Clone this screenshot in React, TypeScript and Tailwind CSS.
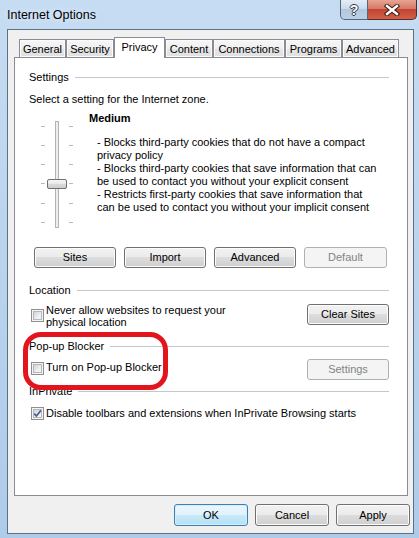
import React from 'react';

const tabs = [
  { label: 'General', w: 'w-[47px]' },
  { label: 'Security', w: 'w-[48px]' },
  { label: 'Privacy', w: 'w-[51px]', active: true },
  { label: 'Content', w: 'w-[48px]' },
  { label: 'Connections', w: 'w-[72px]' },
  { label: 'Programs', w: 'w-[57px]' },
  { label: 'Advanced', w: 'w-[57px]' },
];

const btn =
  'flex items-center justify-center rounded-[3px] border text-[11px] leading-[13px]';
const btnNormal =
  'border-[#707070] text-black bg-[linear-gradient(to_bottom,#f2f2f2_0%,#ebebeb_50%,#dddddd_50%,#cfcfcf_100%)] shadow-[inset_0_0_0_1px_#fcfcfc]';
const btnDisabled = 'border-[#adb2b5] bg-[#f4f4f4] text-[#838383]';
const btnDefault =
  'border-[#3c7fb1] text-black bg-[linear-gradient(to_bottom,#eaf6fd_0%,#e0f2fc_50%,#c9e9f9_50%,#b6e0f6_100%)] shadow-[inset_0_0_0_1px_#d6eefb]';

const Checkbox = ({ checked }: { checked?: boolean }) => (
  <span className="relative flex h-[13px] w-[13px] shrink-0 items-center justify-center border border-[#8e8f8f] bg-[#f4f4f4]">
    <span className="h-[9px] w-[9px] border border-[#b5b9be] bg-[linear-gradient(135deg,#cfd1d4_0%,#eceeef_60%,#f8f8f8_100%)]" />
    {checked && (
      <svg className="absolute left-[1px] top-[1px]" width="9" height="9" viewBox="0 0 9 9">
        <path d="M1.2 4.6 L3.4 7 L7.9 1.4" fill="none" stroke="#4a5f97" strokeWidth="1.7" />
      </svg>
    )}
  </span>
);

const GroupHeader = ({ title }: { title: string }) => (
  <div className="flex h-[13px] items-center">
    <span className="text-[11px] leading-[13px]">{title}</span>
    <div className="ml-[6px] h-px flex-1 bg-[#c3c7cb]" />
  </div>
);

const Slider = () => {
  const ticks = [5, 24, 43, 62, 82, 101];
  return (
    <svg width="32" height="107" viewBox="0 0 32 107">
      <defs>
        <linearGradient id="thumb" x1="0" y1="0" x2="0" y2="1">
          <stop offset="0" stopColor="#f7f7f7" />
          <stop offset="0.5" stopColor="#e8e8e8" />
          <stop offset="0.5" stopColor="#dadada" />
          <stop offset="1" stopColor="#cdcdcd" />
        </linearGradient>
      </defs>
      {ticks.map((y) => (
        <g key={y}>
          <rect x="0" y={y} width="4" height="1" fill="#b9b9b9" />
          <rect x="28" y={y} width="4" height="1" fill="#b9b9b9" />
        </g>
      ))}
      <rect x="14.5" y="0.5" width="3" height="106" fill="#eeeeee" stroke="#b3b3b3" />
      <rect x="6.5" y="58.5" width="19" height="9" rx="1.5" fill="url(#thumb)" stroke="#707070" />
    </svg>
  );
};

export default function App() {
  return (
    <div className="flex h-[538px] w-[419px] flex-col overflow-hidden bg-[linear-gradient(to_bottom,#c6dcf2_0%,#bcd5ee_40%,#aecbe9_100%)] font-['Liberation_Sans',Arial,sans-serif] text-black">
      {/* title bar */}
      <div className="flex h-[29px] shrink-0 items-start">
        <div className="pl-[7px] pt-[7px] text-[12.5px] leading-[16px] text-black [text-shadow:0_0_6px_#eaf3fb]">
          Internet Options
        </div>
        <div className="flex-1" />
        <div className="flex h-[20px] items-stretch">
          <div className="flex w-[28px] items-center justify-center rounded-bl-[5px] border border-t-0 border-[#53687d] bg-[linear-gradient(to_bottom,#e3edf7_0%,#c9d9ea_50%,#b3c8de_50%,#bcd0e5_100%)]">
            <span className="text-[14px] font-bold leading-[14px] text-white [text-shadow:1px_0_0_#2f3b47,-1px_0_0_#2f3b47,0_1px_0_#2f3b47,0_-1px_0_#2f3b47]">
              ?
            </span>
          </div>
          <div className="flex w-[49px] items-center justify-center rounded-br-[5px] border border-l-0 border-t-0 border-[#5b2a22] bg-[linear-gradient(to_bottom,#e8a493_0%,#d47a66_45%,#c0452e_50%,#d2604a_100%)]">
            <svg width="16" height="12" viewBox="0 0 16 12">
              <path d="M3 2 L13 10 M13 2 L3 10" stroke="#3d1a14" strokeWidth="4.4" strokeLinecap="square" />
              <path d="M3 2 L13 10 M13 2 L3 10" stroke="#ffffff" strokeWidth="2.4" strokeLinecap="square" />
            </svg>
          </div>
        </div>
        <div className="w-[2px]" />
      </div>

      {/* client area */}
      <div className="ml-[7px] flex h-[505px] w-[407px] shrink-0 flex-col border border-[#5d7185] bg-[#f0f0f0]">
        <div className="ml-[11px] mt-[7px] flex h-[21px] items-start">
          {tabs.map((t) =>
            t.active ? (
              <div
                key={t.label}
                className={`${t.w} relative z-10 flex h-[21px] items-start justify-center border border-b-0 border-[#898c95] bg-white pt-[3px] text-[11px] leading-[13px]`}
              >
                {t.label}
              </div>
            ) : (
              <div
                key={t.label}
                className={`${t.w} mt-[2px] flex h-[18px] items-start justify-center border border-b-0 border-[#898c95] bg-[linear-gradient(to_bottom,#f6f6f6_0%,#efefef_50%,#e6e6e6_50%,#e0e0e0_100%)] pt-[3px] text-[11px] leading-[13px] shadow-[inset_0_0_0_1px_#fbfbfb]`}
              >
                {t.label}
              </div>
            ),
          )}
        </div>

        <div className="relative -mt-px ml-[6px] h-[439px] w-[394px] border border-[#898c95] bg-white pl-[14px] pr-[18px] pt-[13px] text-[11px] leading-[13px]">
          <GroupHeader title="Settings" />
          <div className="mt-[9px]">Select a setting for the Internet zone.</div>

          <div className="mt-[6px] flex items-start">
            <div className="ml-[12px] mt-[9px]">
              <Slider />
            </div>
            <div className="ml-[16px]">
              <div className="font-bold">Medium</div>
              <div className="mt-[11px] pl-[8px]">
                <div>- Blocks third-party cookies that do not have a compact</div>
                <div>privacy policy</div>
                <div>- Blocks third-party cookies that save information that can</div>
                <div>be used to contact you without your explicit consent</div>
                <div>- Restricts first-party cookies that save information that</div>
                <div>can be used to contact you without your implicit consent</div>
              </div>
            </div>
          </div>

          <div className="ml-[5px] mt-[19px] flex gap-[8px]">
            <div className={`${btn} ${btnNormal} h-[21px] w-[82px]`}>Sites</div>
            <div className={`${btn} ${btnNormal} h-[21px] w-[82px]`}>Import</div>
            <div className={`${btn} ${btnNormal} h-[21px] w-[82px]`}>Advanced</div>
            <div className={`${btn} ${btnDisabled} h-[21px] w-[83px]`}>Default</div>
          </div>

          <div className="mt-[16px]">
            <GroupHeader title="Location" />
          </div>
          <div className="mt-[7px] flex items-start justify-between">
            <div className="ml-[2px] flex items-start">
              <div className="mt-[5px]">
                <Checkbox />
              </div>
              <div className="ml-[2px] leading-[12px]">
                <div>Never allow websites to request your</div>
                <div>physical location</div>
              </div>
            </div>
            <div className={`${btn} ${btnNormal} h-[21px] w-[82px]`}>Clear Sites</div>
          </div>

          <div className="mt-[12px]">
            <GroupHeader title="Pop-up Blocker" />
          </div>
          <div className="mt-[6px] flex items-start justify-between">
            <div className="ml-[2px] flex items-start">
              <div className="mt-[3px]">
                <Checkbox />
              </div>
              <div className="ml-[2px] mt-[2px]">Turn on Pop-up Blocker</div>
            </div>
            <div className={`${btn} ${btnDisabled} h-[21px] w-[82px]`}>Settings</div>
          </div>

          <div className="mt-[5px]">
            <GroupHeader title="InPrivate" />
          </div>
          <div className="ml-[2px] mt-[9px] flex h-[13px] items-center">
            <Checkbox checked />
            <div className="ml-[2px]">Disable toolbars and extensions when InPrivate Browsing starts</div>
          </div>

          {/* red annotation */}
          <div className="absolute left-[8px] top-[274px] h-[58px] w-[145px] rounded-[18px] border-[5px] border-[#e3141b]" />
        </div>

        <div className="mt-[8px] flex justify-end gap-[7px] pr-[3px]">
          <div className={`${btn} ${btnDefault} h-[22px] w-[74px]`}>OK</div>
          <div className={`${btn} ${btnNormal} h-[22px] w-[74px]`}>Cancel</div>
          <div className={`${btn} ${btnNormal} h-[22px] w-[74px]`}>Apply</div>
        </div>
      </div>
    </div>
  );
}
